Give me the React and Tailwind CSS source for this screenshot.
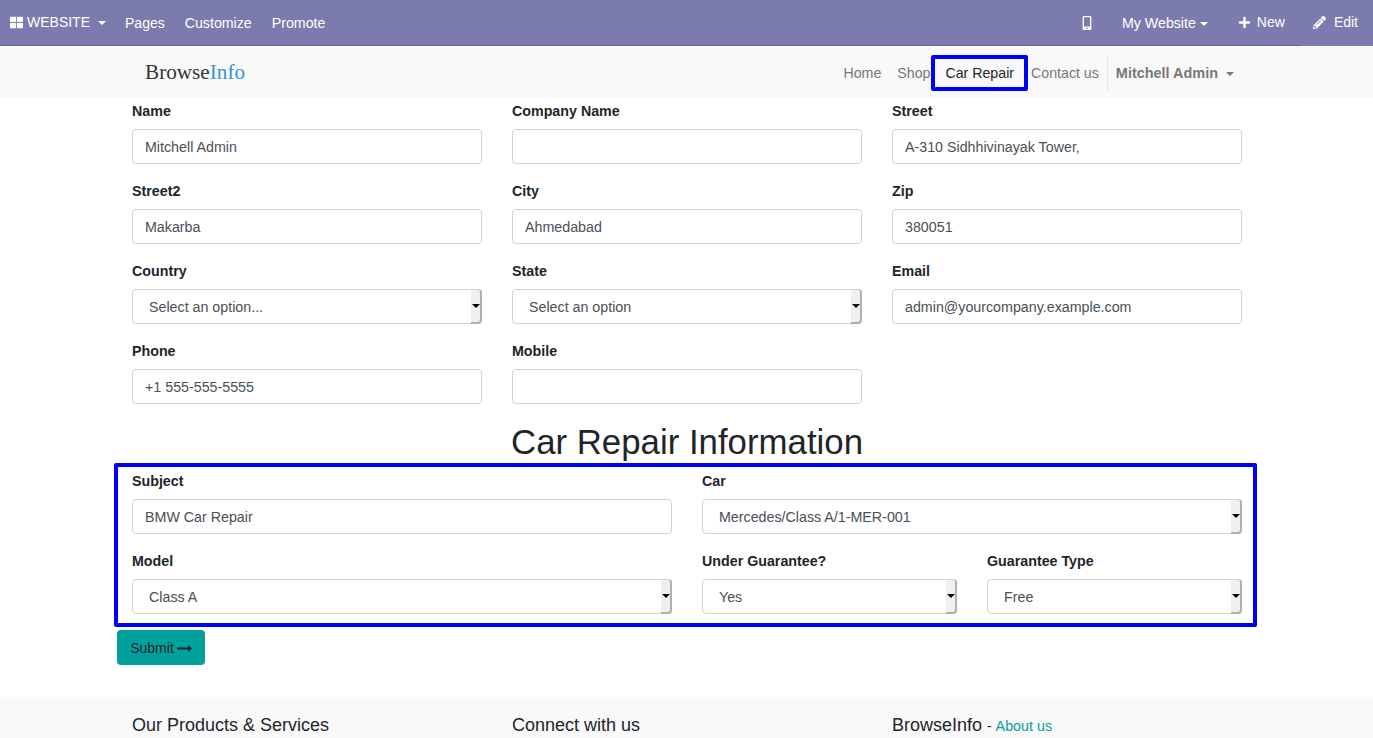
import React from "react";
import { FaThLarge, FaMobileAlt, FaPlus, FaPencilAlt } from "react-icons/fa";

const Caret = ({ className = "" }) => (
  <span className={`inline-block w-0 h-0 border-x-[4px] border-x-transparent border-t-[4px] ${className}`} />
);

const Field = ({ label, value = "", className = "" }) => (
  <div className={`mb-[17px] ${className}`}>
    <label className="block mb-[7px] font-bold text-[14.25px] leading-[21px] text-[#212529]">{label}</label>
    <input
      readOnly
      value={value}
      className="block w-full h-[35px] px-3 rounded border border-[#ced4da] bg-white text-[14.25px] text-[#495057] outline-none"
    />
  </div>
);

const SelectField = ({ label, value, className = "" }) => (
  <div className={`mb-[17px] ${className}`}>
    <label className="block mb-[7px] font-bold text-[14.25px] leading-[21px] text-[#212529]">{label}</label>
    <div className="relative">
      <select
        defaultValue={value}
        className="block w-full h-[35px] pl-4 pr-3 pt-[3px] rounded border border-[#ced4da] bg-white text-[14.25px] text-[#495057] outline-none appearance-none"
      >
        <option>{value}</option>
      </select>
      {/* native style spinner on the right */}
      <span className="absolute right-0 top-0 h-[35px] w-[11px] flex items-center justify-center rounded-r bg-[#efefef] border-r-2 border-b-2 border-[#b0b0b0] border-t border-t-[#ced4da] pointer-events-none">
        <Caret className="border-t-black border-x-[3px] border-t-[4px]" />
      </span>
    </div>
  </div>
);

const App = () => {
  return (
    <div className="h-screen overflow-hidden bg-white font-['Liberation_Sans',Arial,sans-serif] text-[14px] text-[#212529]">
      {/* Admin bar */}
      <div className="h-[46px] bg-[#7c7bad] text-white flex items-center justify-between text-[14px] relative">
        <div className="flex items-center">
          <a className="flex items-center pl-[10px] pr-[10px]">
            <FaThLarge className="text-[13px] mr-1" />
            WEBSITE
            <Caret className="border-t-white ml-2" />
          </a>
          <a className="pl-[9px] pr-[10px] pt-[2px]">Pages</a>
          <a className="px-[10px] pt-[2px] text-[14.2px]">Customize</a>
          <a className="px-[10px] pt-[2px] text-[14.2px]">Promote</a>
        </div>
        <div className="flex items-center pr-[15px]">
          <FaMobileAlt className="text-[14px] mr-[28px]" />
          <a className="flex items-center mr-[30px] pt-[2px] text-[14.2px]">
            My Website
            <Caret className="border-t-white ml-1" />
          </a>
          <a className="flex items-center mr-[28px]">
            <FaPlus className="text-[13px] mr-[6px]" />
            New
          </a>
          <a className="flex items-center">
            <FaPencilAlt className="text-[13px] mr-2" />
            Edit
          </a>
        </div>
        <div className="absolute left-0 bottom-0 h-px w-[1300px] bg-[#63628f]" />
      </div>

      {/* Site header */}
      <div className="h-[52px] bg-[#f9f9f9] flex items-center justify-between pl-[145px] pr-[139px]">
        <div className="font-['Liberation_Serif',serif] text-[21.2px] text-[#333333] pt-[2px]">
          Browse<span className="text-[#3a93cf]">Info</span>
        </div>
        <div className="flex items-center text-[#777777] text-[14.2px] pt-[2px]">
          <a className="mr-4 pt-[2px]">Home</a>
          <a className="pt-[2px]">Shop</a>
          <a className="ml-[1px] h-[36px] px-[10px] pt-[2px] flex items-center border-4 border-[#0000ff] rounded-[2px] text-[#212529]">Car Repair</a>
          <a className="ml-[3px] mr-2 pt-[2px]">Contact us</a>
          <div className="h-[38px] border-l border-[#e7e7e7] pl-2 pt-[2px] flex items-center font-bold text-[14.45px]">
            Mitchell Admin
            <Caret className="border-t-[#777777] ml-2" />
          </div>
        </div>
      </div>

      {/* Form */}
      <div className="w-[1140px] ml-[117px] pt-[3px]">
        <div className="grid grid-cols-3 gap-x-[30px] px-[15px]">
          <Field label="Name" value="Mitchell Admin" />
          <Field label="Company Name" />
          <Field label="Street" value="A-310 Sidhhivinayak Tower," />
          <Field label="Street2" value="Makarba" />
          <Field label="City" value="Ahmedabad" />
          <Field label="Zip" value="380051" />
          <SelectField label="Country" value="Select an option..." />
          <SelectField label="State" value="Select an option" />
          <Field label="Email" value="admin@yourcompany.example.com" />
          <Field label="Phone" value="+1 555-555-5555" />
          <Field label="Mobile" />
        </div>

        <h2 className="text-[34.8px] leading-[42px] text-center font-normal">Car Repair Information</h2>

        <div className="border-4 border-[#0000ff] rounded-[2px] -ml-[3px] pt-[4px] pl-[14px] pr-[11px] h-[164px]">
          <div className="grid grid-cols-2 gap-x-[30px]">
            <Field label="Subject" value="BMW Car Repair" />
            <SelectField label="Car" value="Mercedes/Class A/1-MER-001" />
            <SelectField label="Model" value="Class A" />
            <div className="grid grid-cols-2 gap-x-[30px]">
              <SelectField label="Under Guarantee?" value="Yes" />
              <SelectField label="Guarantee Type" value="Free" />
            </div>
          </div>
        </div>

        <button className="mt-[3px] h-[35px] w-[88px] pt-[2px] rounded bg-[#00a09d] text-[#212529] text-[14px] flex items-center justify-center gap-[3px]">
          Submit
          <svg width="15" height="9" viewBox="0 0 15 9" fill="currentColor" className="-mt-[1px]">
            <path d="M0 3.6h11V1l4 3.5-4 3.5V5.4H0z" />
          </svg>
        </button>
      </div>

      {/* Footer */}
      <div className="mt-[32px] bg-[#f9f9f9] h-[60px] pt-4">
        <div className="w-[1140px] ml-[117px] px-[15px] grid grid-cols-3 gap-x-[30px]">
          <div className="text-[18px] leading-6">Our Products &amp; Services</div>
          <div className="text-[18px] leading-6">Connect with us</div>
          <div className="text-[18px] leading-6">
            BrowseInfo <span className="text-[14px]">- </span>
            <a className="text-[14.3px] text-[#00a09d]">About us</a>
          </div>
        </div>
      </div>
    </div>
  );
};

export default App;
